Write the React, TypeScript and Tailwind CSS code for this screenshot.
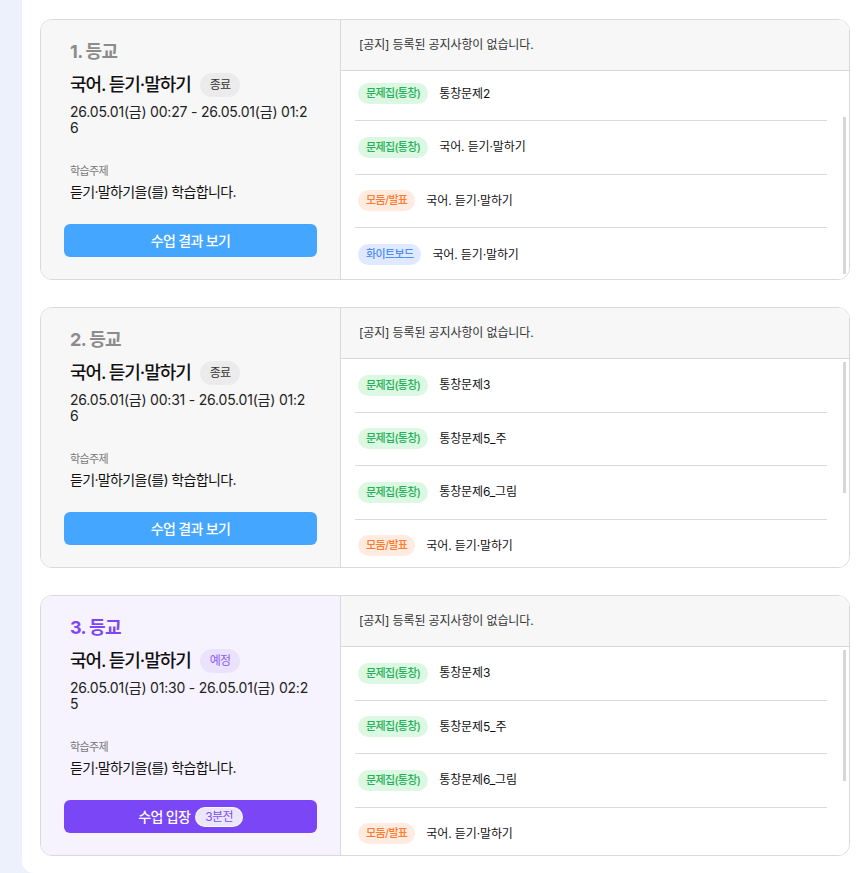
import { useEffect, useRef, useState } from "react"

type TagKind = "problem" | "group" | "board"

interface LessonItem {
  kind: TagKind
  title: string
}

interface Lesson {
  no: number
  subject: string
  status: "done" | "upcoming"
  period: string
  topic: string
  items: LessonItem[]
  scrollToEnd?: boolean
}

const TAGS: Record<TagKind, { label: string; className: string }> = {
  problem: { label: "문제집(통창)", className: "bg-[#dcf7e2] text-[#23b257]" },
  group: { label: "모둠/발표", className: "bg-[#ffebdf] text-[#ff7b30]" },
  board: { label: "화이트보드", className: "bg-[#dfe9ff] text-[#4f8cf6]" },
}

const lessons: Lesson[] = [
  {
    no: 1,
    subject: "국어. 듣기·말하기",
    status: "done",
    period: "26.05.01(금) 00:27 - 26.05.01(금) 01:26",
    topic: "듣기·말하기을(를) 학습합니다.",
    scrollToEnd: true,
    items: [
      { kind: "problem", title: "통창문제1" },
      { kind: "problem", title: "통창문제2" },
      { kind: "problem", title: "국어. 듣기·말하기" },
      { kind: "group", title: "국어. 듣기·말하기" },
      { kind: "board", title: "국어. 듣기·말하기" },
    ],
  },
  {
    no: 2,
    subject: "국어. 듣기·말하기",
    status: "done",
    period: "26.05.01(금) 00:31 - 26.05.01(금) 01:26",
    topic: "듣기·말하기을(를) 학습합니다.",
    items: [
      { kind: "problem", title: "통창문제3" },
      { kind: "problem", title: "통창문제5_주" },
      { kind: "problem", title: "통창문제6_그림" },
      { kind: "group", title: "국어. 듣기·말하기" },
      { kind: "board", title: "국어. 듣기·말하기" },
      { kind: "problem", title: "국어. 듣기·말하기" },
    ],
  },
  {
    no: 3,
    subject: "국어. 듣기·말하기",
    status: "upcoming",
    period: "26.05.01(금) 01:30 - 26.05.01(금) 02:25",
    topic: "듣기·말하기을(를) 학습합니다.",
    items: [
      { kind: "problem", title: "통창문제3" },
      { kind: "problem", title: "통창문제5_주" },
      { kind: "problem", title: "통창문제6_그림" },
      { kind: "group", title: "국어. 듣기·말하기" },
      { kind: "board", title: "국어. 듣기·말하기" },
      { kind: "problem", title: "국어. 듣기·말하기" },
    ],
  },
]

const LessonCard = ({ lesson }: { lesson: Lesson }) => {
  const listRef = useRef<HTMLUListElement>(null)
  const [thumb, setThumb] = useState<{ top: number; height: number } | null>(null)
  const upcoming = lesson.status === "upcoming"

  // 얇은 스크롤바 위치 계산 (기본 스크롤바는 숨김)
  const measure = () => {
    const el = listRef.current
    if (!el || el.scrollHeight <= el.clientHeight) {
      setThumb(null)
      return
    }
    const track = el.clientHeight - 6
    setThumb({
      top: 3 + (el.scrollTop / el.scrollHeight) * track,
      height: (el.clientHeight / el.scrollHeight) * track,
    })
  }

  useEffect(() => {
    const el = listRef.current
    if (lesson.scrollToEnd && el) {
      el.scrollTop = el.scrollHeight - el.clientHeight - 3
    }
    measure()
  }, [lesson.scrollToEnd])

  return (
    <div className="flex h-[261px] overflow-hidden rounded-xl border border-[#dadada]">
      <div
        className={`flex w-[300px] shrink-0 flex-col border-r border-[#dadada] px-[23px] pt-[19px] pb-[22px] ${
          upcoming ? "bg-[#f6f3fe]" : "bg-[#f7f7f7]"
        }`}
      >
        <div className="px-[6px]">
          <h2
            className={`text-[18px] font-bold leading-[26px] ${
              upcoming ? "text-[#7e46f4]" : "text-[#8c8c8c]"
            }`}
          >
            {lesson.no}. 등교
          </h2>
          <div className="mt-2 flex items-center gap-[9px]">
            <span className="text-[18px] font-medium leading-6 tracking-[-0.06em] text-[#111]">
              {lesson.subject}
            </span>
            <span
              className={`rounded-full px-[10px] text-[12px] leading-6 ${
                upcoming
                  ? "bg-[#ebe3fe] text-[#8a5cf4]"
                  : "bg-[#ebebeb] text-[#333]"
              }`}
            >
              {upcoming ? "예정" : "종료"}
            </span>
          </div>
          <p className="mt-[7px] break-all text-[14px] leading-4 tracking-[-0.015em] text-[#222]">
            {lesson.period}
          </p>
          <p className="mt-7 text-[11px] leading-[14px] text-[#777]">학습주제</p>
          <p className="mt-1 text-[14px] leading-5 text-[#111]">{lesson.topic}</p>
        </div>

        {upcoming ? (
          <button className="mt-auto flex h-[33px] w-full items-center justify-center gap-[5px] rounded-md bg-[#7b46f6] text-[14px] font-medium text-white">
            수업 입장
            <span className="rounded-full border border-white/80 bg-[#ece6fd] px-[9px] text-[12px] font-normal leading-[18px] text-[#7c4ff0]">
              3분전
            </span>
          </button>
        ) : (
          <button className="mt-auto h-[33px] w-full rounded-md bg-[#44a6ff] text-[14px] font-medium text-white">
            수업 결과 보기
          </button>
        )}
      </div>

      <div className="flex min-w-0 flex-1 flex-col bg-white">
        <div className="flex h-[51px] shrink-0 items-center border-b border-[#dadada] bg-[#f7f7f7] px-[18px] text-[12px] tracking-[-0.01em] text-[#333]">
          [공지] 등록된 공지사항이 없습니다.
        </div>
        <div className="relative min-h-0 flex-1">
          <ul
            ref={listRef}
            onScroll={measure}
            className="h-full overflow-y-auto pl-[14px] pr-[22px] [scrollbar-width:none]"
          >
            {lesson.items.map((item, i) => (
              <li
                key={i}
                className="flex h-[53.5px] items-center gap-[11px] border-b border-[#dadada] px-[3px] last:border-b-0"
              >
                <span
                  className={`rounded-full px-[8px] text-[11px] font-medium leading-[21px] ${TAGS[item.kind].className}`}
                >
                  {TAGS[item.kind].label}
                </span>
                <span className="text-[12px] tracking-[-0.01em] text-[#111]">
                  {item.title}
                </span>
              </li>
            ))}
          </ul>
          {thumb && (
            <div
              className="absolute right-[3px] w-[3px] bg-[#d6d6d6]"
              style={{ top: thumb.top, height: thumb.height }}
            />
          )}
        </div>
      </div>
    </div>
  )
}

export default function App() {
  return (
    <div className="flex min-h-screen bg-[#edf1fb] font-['Inter','Noto_Sans_CJK_KR',sans-serif] tracking-[-0.04em]">
      <aside className="w-[22px] shrink-0" />
      <main className="flex-1 rounded-bl-xl bg-white px-[18px] pt-[19px] pb-[17px]">
        <div className="flex flex-col gap-[27px]">
          {lessons.map((lesson) => (
            <LessonCard key={lesson.no} lesson={lesson} />
          ))}
        </div>
      </main>
    </div>
  )
}
